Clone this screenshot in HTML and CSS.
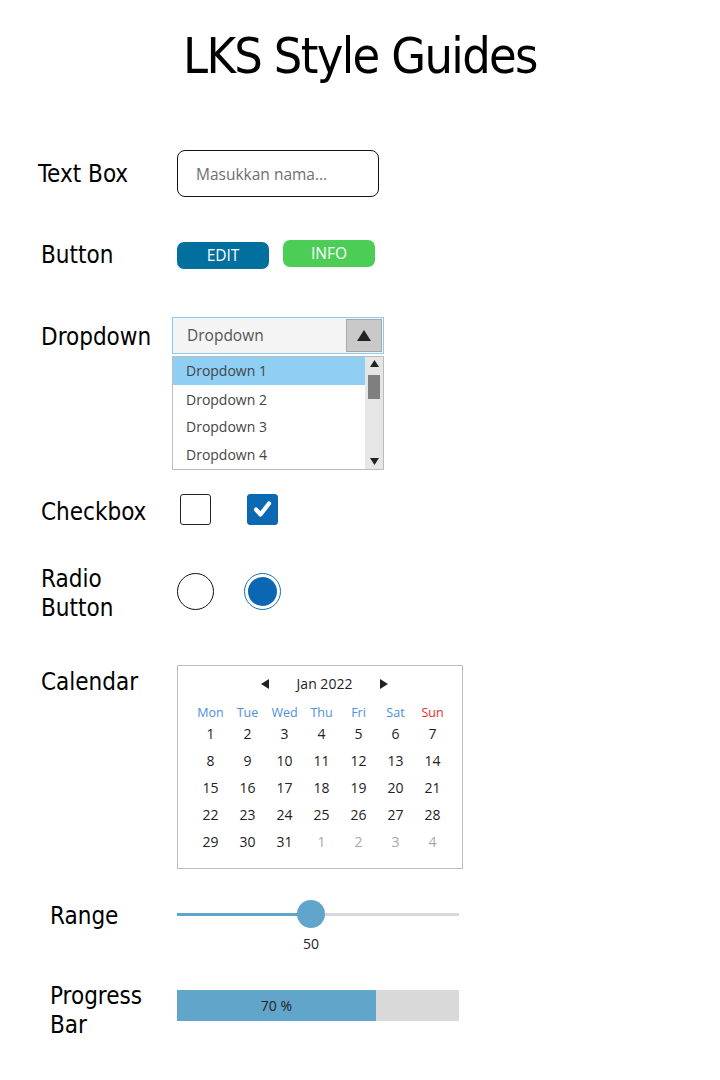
FILE: index.html
```html
<!DOCTYPE html>
<html>
<head>
<meta charset="utf-8">
<link rel="stylesheet" href="styles.css">
</head>
<body>
<main class="page">
  <h1 class="title">LKS Style Guides</h1>

  <section class="row row-text">
    <div class="label l-text">Text Box</div>
    <div class="textbox"><span class="placeholder">Masukkan nama...</span></div>
  </section>

  <section class="row row-button">
    <div class="label l-button">Button</div>
    <div class="buttons">
      <button class="btn btn-edit">EDIT</button>
      <button class="btn btn-info">INFO</button>
    </div>
  </section>

  <section class="row row-dropdown">
    <div class="label l-dropdown">Dropdown</div>
    <div class="dropdown">
      <div class="select">
        <span class="select-text">Dropdown</span>
        <span class="select-arrow"><svg width="14" height="11" viewBox="0 0 14 11"><path d="M7 0 L14 11 L0 11 Z" fill="#222"/></svg></span>
      </div>
      <div class="list">
        <div class="items">
          <div class="item active">Dropdown 1</div>
          <div class="item">Dropdown 2</div>
          <div class="item">Dropdown 3</div>
          <div class="item">Dropdown 4</div>
        </div>
        <div class="scrollbar">
          <svg class="sb-up" width="9" height="7" viewBox="0 0 9 7"><path d="M4.5 0 L9 7 L0 7 Z" fill="#222"/></svg>
          <div class="sb-thumb"></div>
          <svg class="sb-down" width="9" height="7" viewBox="0 0 9 7"><path d="M0 0 L9 0 L4.5 7 Z" fill="#222"/></svg>
        </div>
      </div>
    </div>
  </section>

  <section class="row row-check">
    <div class="label l-check">Checkbox</div>
    <div class="checks">
      <span class="checkbox"></span>
      <span class="checkbox checked"><svg width="31" height="31" viewBox="0 0 31 31"><path d="M9 15.5 L13.5 20.5 L22 9.5" fill="none" stroke="#fff" stroke-width="4.2" stroke-linecap="round" stroke-linejoin="round"/></svg></span>
    </div>
  </section>

  <section class="row row-radio">
    <div class="label l-radio">Radio<br>Button</div>
    <div class="radios">
      <span class="radio"></span>
      <span class="radio selected"><span class="dot"></span></span>
    </div>
  </section>

  <section class="row row-cal">
    <div class="label l-cal">Calendar</div>
    <div class="calendar">
      <div class="cal-head">
        <svg width="8" height="10" viewBox="0 0 8 10"><path d="M8 0 L8 10 L0 5 Z" fill="#222"/></svg>
        <span class="cal-month">Jan 2022</span>
        <svg width="8" height="10" viewBox="0 0 8 10"><path d="M0 0 L8 5 L0 10 Z" fill="#222"/></svg>
      </div>
      <div class="cal-grid">
        <span class="dow">Mon</span><span class="dow">Tue</span><span class="dow">Wed</span><span class="dow">Thu</span><span class="dow">Fri</span><span class="dow">Sat</span><span class="dow sun">Sun</span>
        <span>1</span><span>2</span><span>3</span><span>4</span><span>5</span><span>6</span><span>7</span>
        <span>8</span><span>9</span><span>10</span><span>11</span><span>12</span><span>13</span><span>14</span>
        <span>15</span><span>16</span><span>17</span><span>18</span><span>19</span><span>20</span><span>21</span>
        <span>22</span><span>23</span><span>24</span><span>25</span><span>26</span><span>27</span><span>28</span>
        <span>29</span><span>30</span><span>31</span><span class="muted">1</span><span class="muted">2</span><span class="muted">3</span><span class="muted">4</span>
      </div>
    </div>
  </section>

  <section class="row row-range">
    <div class="label l-range">Range</div>
    <div class="range">
      <div class="track">
        <div class="track-fill" style="width: 134px"></div>
        <div class="thumb" style="left: 134px"></div>
      </div>
      <div class="range-value">50</div>
    </div>
  </section>

  <section class="row row-progress">
    <div class="label l-progress">Progress<br>Bar</div>
    <div class="progress">
      <div class="progress-fill" style="width: 70.5%">70 %</div>
    </div>
  </section>
</main>
</body>
</html>
```

FILE: styles.css
```css
* { box-sizing: border-box; }
html, body { margin: 0; padding: 0; background: #fff; }
body { width: 720px; height: 1080px; overflow: hidden; }

.page {
  display: flex;
  flex-direction: column;
  font-family: "Open Sans", "Noto Sans", sans-serif;
  color: #333;
}

.title {
  margin: 0;
  padding-top: 26px;
  height: 88px;
  line-height: 60px;
  text-align: center;
  font-family: "DejaVu Sans", sans-serif;
  font-stretch: condensed;
  font-weight: normal;
  font-size: 50px;
  color: #000;
  letter-spacing: -1.65px;
  padding-right: 0;
}

.row {
  display: flex;
  align-items: center;
}

.label {
  font-family: "DejaVu Sans", sans-serif;
  font-stretch: condensed;
  font-size: 24px;
  line-height: 29px;
  color: #000;
  flex: none;
  position: relative;
  top: 1px;
}

.l-text { width: 177px; padding-left: 38px; }
.l-button { width: 177px; padding-left: 41px; }
.l-dropdown { width: 172px; padding-left: 41px; }
.l-check { width: 180px; padding-left: 41px; top: 3px; }
.l-radio { width: 177px; padding-left: 41px; top: 3px; }
.l-cal { width: 177px; padding-left: 41px; }
.l-range { width: 177px; padding-left: 50px; top: 2px; }
.l-progress { width: 177px; padding-left: 50px; top: 2px; }

/* Text box */
.row-text { margin-top: 62px; height: 47px; }
.textbox {
  width: 202px;
  height: 47px;
  border: 1px solid #111;
  border-radius: 8px;
  display: flex;
  align-items: center;
  padding-left: 18px;
}
.placeholder { font-size: 15.5px; color: #6f6f6f; }

/* Buttons */
.row-button { margin-top: 43px; height: 29px; align-items: flex-start; }
.buttons { display: flex; gap: 14px; align-items: flex-start; }
.btn {
  width: 92px;
  height: 27px;
  border: none;
  border-radius: 7px;
  color: #fff;
  font-family: "Open Sans", sans-serif;
  font-size: 15.5px;
  padding: 0;
  line-height: 27px;
}
.btn-edit { background: #02709f; margin-top: 2px; }
.btn-info { background: #4ccd55; }

/* Dropdown */
.row-dropdown { margin-top: 48px; align-items: flex-start; }
.l-dropdown { margin-top: 5px; }
.dropdown { width: 212px; display: flex; flex-direction: column; gap: 2px; }
.select {
  height: 37px;
  border: 1px solid #8dcbf0;
  background: #f4f4f4;
  display: flex;
  align-items: center;
  justify-content: space-between;
  padding: 1px;
}
.select-text { padding-left: 13px; font-size: 15.5px; color: #555; position: relative; top: -1px; }
.select-arrow {
  width: 36px;
  height: 33px;
  background: #c9c9c9;
  border: 1px solid #a9a9a9;
  display: flex;
  align-items: center;
  justify-content: center;
}
.list {
  height: 114px;
  border: 1px solid #bcbcbc;
  display: flex;
}
.items { flex: 1; display: flex; flex-direction: column; }
.item {
  height: 28px;
  line-height: 28px;
  padding-left: 13px;
  font-size: 14px;
  color: #444;
}
.item.active { background: #8ecff3; height: 29px; line-height: 27px; }
.item:nth-child(2) { line-height: 30px; }
.scrollbar {
  width: 18px;
  background: #e6e6e6;
  display: flex;
  flex-direction: column;
  align-items: center;
  padding-top: 3px;
}
.sb-thumb { width: 12px; height: 24px; background: #7f7f7f; margin-top: 8px; }
.sb-down { margin-top: auto; margin-bottom: 4px; }

/* Checkbox */
.row-check { margin-top: 24px; height: 31px; }
.checks { display: flex; gap: 36px; }
.checkbox {
  width: 31px;
  height: 31px;
  border: 1px solid #222;
  border-radius: 3px;
  display: block;
}
.checkbox.checked { background: #0b69b3; border-color: #0b69b3; position: relative; }
.checkbox.checked svg { position: absolute; left: -1px; top: -1px; }

/* Radio */
.row-radio { margin-top: 37px; height: 58px; }
.radios { display: flex; gap: 30px; }
.radio {
  width: 37px;
  height: 37px;
  border: 1.5px solid #111;
  border-radius: 50%;
  display: flex;
  align-items: center;
  justify-content: center;
}
.radio.selected { border: 1.5px solid #1a6fb8; }
.dot { width: 29px; height: 29px; border-radius: 50%; background: #0b67b3; }

/* Calendar */
.row-cal { margin-top: 45px; align-items: flex-start; }
.l-cal { margin-top: 2px; }
.calendar {
  width: 286px;
  height: 204px;
  border: 1px solid #bdbdbd;
  padding-left: 14px;
}
.cal-head {
  height: 36px;
  display: flex;
  align-items: center;
  justify-content: center;
  gap: 28px;
  padding-bottom: 1px;
  margin-left: -14px;
  padding-left: 9px;
}
.cal-month { font-size: 14px; color: #222; }
.cal-grid {
  display: grid;
  grid-template-columns: repeat(7, 37px);
  grid-template-rows: 20px repeat(5, 27px);
  font-size: 14px;
  color: #222;
  text-align: center;
  margin-top: 1px;
}
.cal-grid span { line-height: 22px; }
.cal-grid .dow { font-size: 12.5px; color: #4a8fdd; line-height: 20px; }
.cal-grid .dow.sun { color: #ee2b2b; }
.cal-grid .muted { color: #a8a8a8; }

/* Range */
.row-range { margin-top: 31px; align-items: flex-start; }
.range { width: 282px; display: flex; flex-direction: column; }
.track {
  position: relative;
  margin-top: 13px;
  height: 3px;
  background: #d9d9d9;
}
.track-fill { height: 3px; background: #5fa4cb; }
.thumb {
  position: absolute;
  top: -13px;
  width: 28px;
  height: 28px;
  margin-left: -14px;
  border-radius: 50%;
  background: #62a5cc;
}
.range-value {
  margin-top: 18px;
  width: 268px;
  text-align: center;
  font-size: 14px;
  color: #222;
}

/* Progress */
.row-progress { margin-top: 27px; height: 58px; }
.progress {
  width: 282px;
  height: 31px;
  background: #d9d9d9;
  margin-top: -8px;
}
.progress-fill {
  height: 31px;
  background: #62a5cb;
  line-height: 31px;
  text-align: center;
  font-size: 14px;
  color: #222;
}
```
